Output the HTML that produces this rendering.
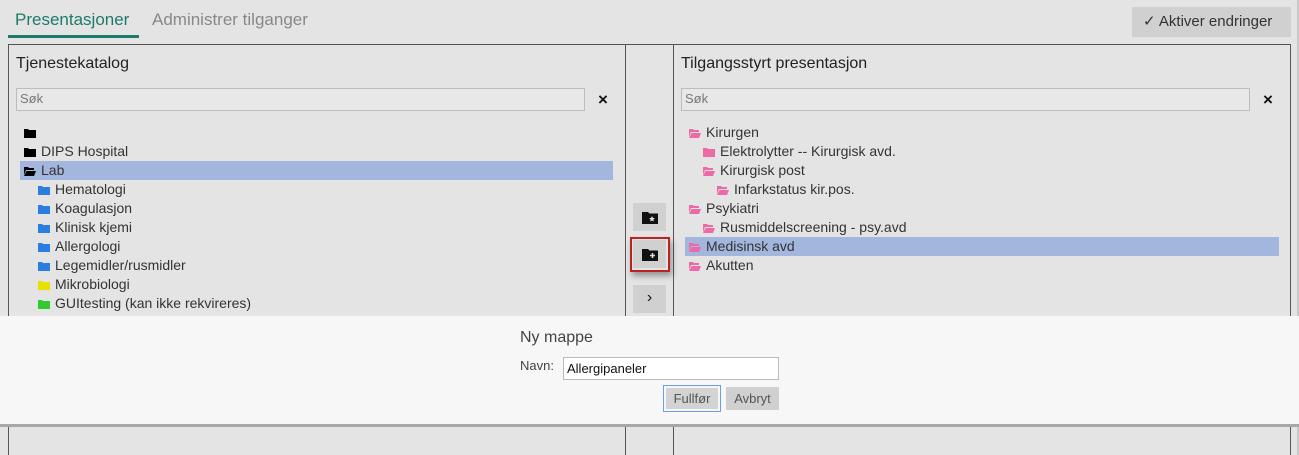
<!DOCTYPE html>
<html><head><meta charset="utf-8"><style>
*{box-sizing:border-box;margin:0;padding:0}
html,body{width:1299px;height:455px;overflow:hidden}
body{background:#e4e4e4;font-family:"Liberation Sans",sans-serif;position:relative;color:#333}
.a{position:absolute}
.row{position:absolute;height:19px;line-height:19px;font-size:14px;color:#333;white-space:nowrap}
.row svg{position:absolute;top:5px;left:0}
.row span{position:absolute;left:17px;top:0}
.sel{background:#a3b6dd}
.btn{position:absolute;background:#d0d0d0}
.x{position:absolute;font-size:17px;font-weight:bold;color:#111;line-height:20px}
</style></head><body>
<div class="a" style="left:15px;top:10px;font-size:17px;color:#1e7a6a">Presentasjoner</div>
<div class="a" style="left:8px;top:35px;width:131px;height:3px;background:#1e7a6a"></div>
<div class="a" style="left:152px;top:10px;font-size:17px;color:#888">Administrer tilganger</div>
<div class="btn" style="left:1132px;top:7px;width:159px;height:30px;font-size:15px;line-height:30px;color:#333;padding-left:11px">✓ Aktiver endringer</div>
<div class="a" style="left:1297px;top:0;width:2px;height:455px;background:#c8c8c8"></div>

<div class="a" style="left:8px;top:44px;width:1283px;height:411px;border:1px solid #555;border-bottom:none"></div>
<div class="a" style="left:625px;top:44px;width:1px;height:411px;background:#555"></div>
<div class="a" style="left:673px;top:44px;width:1px;height:411px;background:#555"></div>

<div class="a" style="left:16px;top:55px;font-size:16px;color:#222">Tjenestekatalog</div>
<div class="a" style="left:16px;top:88px;width:569px;height:23px;border:1px solid #bdbdbd;background:#e8e8e8;font-size:13px;color:#777;padding:2px 3px">Søk</div>
<div class="x" style="left:598px;top:90px">×</div>

<div class="a" style="left:681px;top:55px;font-size:16px;color:#222">Tilgangsstyrt presentasjon</div>
<div class="a" style="left:681px;top:88px;width:569px;height:23px;border:1px solid #bdbdbd;background:#e8e8e8;font-size:13px;color:#777;padding:2px 3px">Søk</div>
<div class="x" style="left:1263px;top:90px">×</div>

<svg width="0" height="0" style="position:absolute"><defs>
<symbol id="f" viewBox="0 0 12 10"><path d="M0 1h4l1 1h7v8H0z"/></symbol>
<symbol id="o" viewBox="0 0 12 10"><path d="M0 1h4l1 1h5v2H2L0 9z M2.5 5H12L10 10H0z"/></symbol>
</defs></svg>

<div class="row" style="left:24px;top:123px;width:500px"><svg width="12" height="10" fill="#000"><use href="#f"/></svg></div>
<div class="row" style="left:24px;top:142px;width:500px"><svg width="12" height="10" fill="#000"><use href="#f"/></svg><span>DIPS Hospital</span></div>
<div class="row sel" style="left:20px;top:161px;width:593px"><svg width="12" height="10" fill="#000" style="left:4px"><use href="#o"/></svg><span style="left:21px">Lab</span></div>
<div class="row" style="left:38px;top:180px;width:500px"><svg width="12" height="10" fill="#2a7de1"><use href="#f"/></svg><span>Hematologi</span></div>
<div class="row" style="left:38px;top:199px;width:500px"><svg width="12" height="10" fill="#2a7de1"><use href="#f"/></svg><span>Koagulasjon</span></div>
<div class="row" style="left:38px;top:218px;width:500px"><svg width="12" height="10" fill="#2a7de1"><use href="#f"/></svg><span>Klinisk kjemi</span></div>
<div class="row" style="left:38px;top:237px;width:500px"><svg width="12" height="10" fill="#2a7de1"><use href="#f"/></svg><span>Allergologi</span></div>
<div class="row" style="left:38px;top:256px;width:500px"><svg width="12" height="10" fill="#2a7de1"><use href="#f"/></svg><span>Legemidler/rusmidler</span></div>
<div class="row" style="left:38px;top:275px;width:500px"><svg width="12" height="10" fill="#e8e000"><use href="#f"/></svg><span>Mikrobiologi</span></div>
<div class="row" style="left:38px;top:294px;width:500px"><svg width="12" height="10" fill="#2ecc2e"><use href="#f"/></svg><span>GUItesting (kan ikke rekvireres)</span></div>

<div class="row" style="left:689px;top:123px;width:500px"><svg width="12" height="10" fill="#ee6aa7"><use href="#o"/></svg><span>Kirurgen</span></div>
<div class="row" style="left:703px;top:142px;width:500px"><svg width="12" height="10" fill="#ee6aa7"><use href="#f"/></svg><span>Elektrolytter -- Kirurgisk avd.</span></div>
<div class="row" style="left:703px;top:161px;width:500px"><svg width="12" height="10" fill="#ee6aa7"><use href="#o"/></svg><span>Kirurgisk post</span></div>
<div class="row" style="left:717px;top:180px;width:500px"><svg width="12" height="10" fill="#ee6aa7"><use href="#o"/></svg><span>Infarkstatus kir.pos.</span></div>
<div class="row" style="left:689px;top:199px;width:500px"><svg width="12" height="10" fill="#ee6aa7"><use href="#o"/></svg><span>Psykiatri</span></div>
<div class="row" style="left:703px;top:218px;width:500px"><svg width="12" height="10" fill="#ee6aa7"><use href="#o"/></svg><span>Rusmiddelscreening - psy.avd</span></div>
<div class="row sel" style="left:685px;top:237px;width:594px"><svg width="12" height="10" fill="#ee6aa7" style="left:4px"><use href="#o"/></svg><span style="left:21px">Medisinsk avd</span></div>
<div class="row" style="left:689px;top:256px;width:500px"><svg width="12" height="10" fill="#ee6aa7"><use href="#o"/></svg><span>Akutten</span></div>

<div class="btn" style="left:633px;top:203px;width:33px;height:28px"><svg class="a" style="left:9px;top:8px" width="16" height="13" viewBox="0 0 16 13"><path d="M0 1h6l1.5 1.5H16V13H0z" fill="#111"/><path d="M10 5l.9 1.9 2 .2-1.5 1.4.4 2-1.8-1-1.8 1 .4-2L7.1 7.1l2-.2z" fill="#ddd"/></svg></div>
<div class="a" style="left:630px;top:237px;width:40px;height:35px;border:2px solid #b22;box-shadow:2px 4px 6px rgba(0,0,0,.35)"></div>
<div class="btn" style="left:633px;top:240px;width:33px;height:28px"><svg class="a" style="left:9px;top:8px" width="16" height="13" viewBox="0 0 16 13"><path d="M0 1h6l1.5 1.5H16V13H0z" fill="#111"/><path d="M10.5 5v5M8 7.5h5" stroke="#ddd" stroke-width="1.6"/></svg></div>
<div class="btn" style="left:633px;top:285px;width:33px;height:28px;text-align:center;line-height:26px;font-size:16px;color:#111">›</div>

<div class="a" style="left:0;top:316px;width:1299px;height:108px;background:#f7f7f7"></div>
<div class="a" style="left:0;top:424px;width:1299px;height:3px;background:#a8a8a8"></div>
<div class="a" style="left:520px;top:329px;font-size:16px;color:#444">Ny mappe</div>
<div class="a" style="left:520px;top:358px;font-size:13px;color:#444">Navn:</div>
<div class="a" style="left:563px;top:357px;width:216px;height:23px;border:1px solid #bbb;background:#fff;font-size:13px;color:#111;padding:3px 3px">Allergipaneler</div>
<div class="a" style="left:663px;top:385px;width:58px;height:27px;border:1px solid #6b9ee8;padding:2px"><div style="background:#d3d3d3;height:100%;font-size:13px;line-height:21px;text-align:center;color:#555">Fullfør</div></div>
<div class="btn" style="left:726px;top:387px;width:53px;height:23px;font-size:13px;line-height:23px;text-align:center;color:#555">Avbryt</div>
</body></html>
